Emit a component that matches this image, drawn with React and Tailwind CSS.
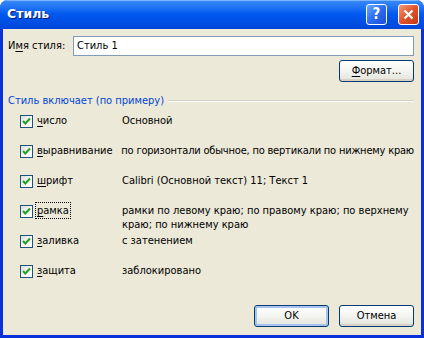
import React from "react";

const font = { fontFamily: '"DejaVu Sans Condensed", "Liberation Sans", sans-serif' };

function Check() {
  return (
    <div className="w-[13px] h-[13px] border border-[#1c5180] bg-gradient-to-br from-[#dcdcd7] via-[#f4f4f2] to-white flex items-center justify-center">
      <svg width="9" height="9" viewBox="0 0 9 9">
        <path d="M1 4 L3.3 6.5 L8 1.5" stroke="#21a121" strokeWidth="2" fill="none" />
      </svg>
    </div>
  );
}

function Row({ u, rest, desc, focused, nowrap }) {
  return (
    <div className="flex h-[30px] items-start leading-[14px]">
      <div className="w-[13px] pt-[1px] ml-[12px]">
        <Check />
      </div>
      <div className="w-[86px] ml-[3px]">
        <span className={focused ? "outline outline-1 outline-dotted outline-black px-[1px] py-[1px]" : "px-[1px]"}>
          <span className="underline underline-offset-2">{u}</span>
          {rest}
        </span>
      </div>
      <div className={"flex-1 " + (nowrap ? "whitespace-nowrap tracking-[-0.2px]" : "")}>{desc}</div>
    </div>
  );
}

function XPButton({ children, def, className = "" }) {
  return (
    <div
      className={
        "h-[22px] w-[75px] rounded-[3px] border border-[#003c74] bg-gradient-to-b from-white via-[#f4f4f0] to-[#e3e3db] flex items-center justify-center text-black " +
        (def ? "shadow-[inset_0_0_0_2px_#a6c4f2] " : "shadow-[inset_0_-2px_0_#d6d0c5] ") +
        className
      }
    >
      {children}
    </div>
  );
}

export default function App() {
  return (
    <div className="w-[424px] h-[338px] bg-[#0831d9] rounded-t-[8px] flex flex-col overflow-hidden text-[11px]" style={font}>
      <div className="h-[29px] bg-gradient-to-b from-[#3a8cf5] via-[#0058ee] to-[#0046d9] flex items-center pl-[7px] pr-[5px] shadow-[inset_0_1px_0_#7eb4ff]">
        <span className="text-white font-bold text-[12.5px] [text-shadow:1px_1px_0_#0a1a6e] flex-1" style={{ fontFamily: '"DejaVu Sans", sans-serif' }}>
          Стиль
        </span>
        <div className="w-[21px] h-[21px] rounded-[3px] border border-white bg-gradient-to-br from-[#6aa8ff] via-[#2c6bf0] to-[#1c4fd8] flex items-center justify-center text-white font-bold text-[15px] mr-[11px]">
          ?
        </div>
        <div className="w-[21px] h-[21px] rounded-[3px] border border-white bg-gradient-to-br from-[#f09a7a] via-[#e0522a] to-[#c03a14] flex items-center justify-center">
          <svg width="11" height="11" viewBox="0 0 11 11">
            <path d="M1.5 1.5 L9.5 9.5 M9.5 1.5 L1.5 9.5" stroke="white" strokeWidth="2.2" />
          </svg>
        </div>
      </div>
      <div className="flex-1 mx-[3px] mb-[3px] bg-[#ece9d8] flex flex-col pl-[5px] pr-[7px] pt-[7px] pb-[8px] text-black">
        <div className="flex items-center h-[20px]">
          <span className="w-[65px]">
            И<span className="underline underline-offset-2">м</span>я стиля:
          </span>
          <div className="flex-1 h-[20px] border border-[#7f9db9] bg-white flex items-center pl-[3px]">Стиль 1</div>
        </div>
        <div className="flex justify-end mt-[4px]">
          <XPButton>
            <span className="underline underline-offset-2">Ф</span>ормат...
          </XPButton>
        </div>
        <div className="flex items-center mt-[12px] h-[14px]">
          <span className="text-[#0046d5] pr-[4px]">Стиль включает (по примеру)</span>
          <div className="flex-1 h-[2px] border-t border-[#d0d0bf] border-b border-b-white" />
        </div>
        <div className="mt-[6px] flex flex-col">
          <Row u="ч" rest="исло" desc="Основной" />
          <Row u="в" rest="ыравнивание" nowrap desc="по горизонтали обычное, по вертикали по нижнему краю" />
          <Row u="ш" rest="рифт" desc="Calibri (Основной текст) 11; Текст 1" />
          <Row u="р" rest="амка" focused desc="рамки по левому краю; по правому краю; по верхнему краю; по нижнему краю" />
          <Row u="з" rest="аливка" desc="с затенением" />
          <Row u="з" rest="ащита" desc="заблокировано" />
        </div>
        <div className="flex-1" />
        <div className="flex justify-end gap-[10px]">
          <XPButton def>OK</XPButton>
          <XPButton>Отмена</XPButton>
        </div>
      </div>
    </div>
  );
}
